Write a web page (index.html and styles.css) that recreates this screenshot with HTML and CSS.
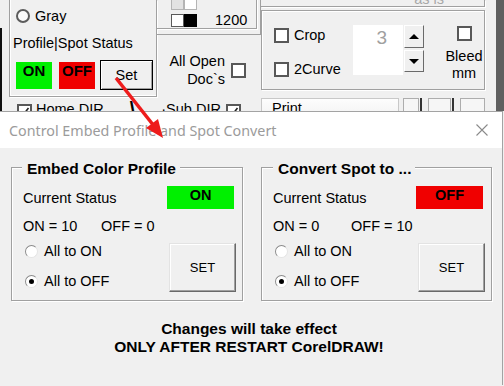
FILE: index.html
```html
<!DOCTYPE html>
<html lang="en">
  <head>
    <meta charset="UTF-8">
    <title>Control Embed Profile and Spot Convert</title>
    <link rel="stylesheet" href="styles.css">
  </head>
  <body>
    <!-- main macro window, mostly hidden behind the dialog -->
    <div class="app">
      <div class="edge"></div>
      <div class="app-left">
        <div class="app-top">
          <div class="box-status">
            <div class="opt"><span class="radio-big"></span>Gray</div>
            <div class="caption">Profile|Spot Status</div>
            <div class="flags">
              <span class="flag on">ON</span>
              <span class="flag off">OFF</span>
              <span class="btn-set">Set</span>
            </div>
          </div>
          <div class="app-mid">
            <div class="swatch-outer">
              <div class="swatch-inner">
                <div class="swatches">
                  <div class="sw-row"><span class="sw light"></span><span class="sw"></span></div>
                  <div class="sw-row"><span class="sw dark-edge"></span><span class="sw black"></span><span class="res">1200</span></div>
                </div>
              </div>
            </div>
            <div class="all-open">
              <span class="all-open-label">All Open<br>Doc`s</span>
              <span class="check"></span>
            </div>
          </div>
        </div>
        <div class="dir-row">
          <span class="check home-check">
            <svg width="11" height="11" viewBox="0 0 11 11"><path d="M1.5 5.5 L4.5 8.5 L9.5 2" fill="none" stroke="#222" stroke-width="1.6"/></svg>
          </span>
          <span class="home-dir">Home DIR</span>
          <span class="slash">\</span>
          <span class="sub-dir">&middot;Sub DIR</span>
          <span class="check sub-check">
            <svg width="11" height="11" viewBox="0 0 11 11"><path d="M1.5 5.5 L4.5 8.5 L9.5 2" fill="none" stroke="#222" stroke-width="1.6"/></svg>
          </span>
        </div>
      </div>
      <div class="app-right">
        <div class="asis"><span>as is</span></div>
        <div class="crop-box">
          <div class="chk-col">
            <div class="chk-row"><span class="check"></span>Crop</div>
            <div class="chk-row"><span class="check"></span>2Curve</div>
          </div>
          <div class="spin">
            <div class="spin-field">3</div>
            <div class="spin-btns">
              <span class="spin-btn up"><span class="tri-up"></span></span>
              <span class="spin-btn down"><span class="tri-down"></span></span>
            </div>
          </div>
          <div class="bleed">
            <span class="check"></span>
            <div class="bleed-label">Bleed<br>mm</div>
          </div>
        </div>
        <div class="print-row">
          <div class="print-field">Print</div>
          <span class="pbtn small"></span>
          <span class="pline"></span>
          <span class="pbtn mid"></span>
          <span class="pline"></span>
          <span class="pbtn wide"></span>
        </div>
      </div>
      <div class="app-bar"></div>
    </div>

    <!-- the dialog -->
    <div class="dialog">
      <div class="titlebar">
        <span>Control Embed Profile and Spot Convert</span>
        <svg class="close" width="12" height="12" viewBox="0 0 12 12">
          <path d="M0.5 0.5 L11.5 11.5 M11.5 0.5 L0.5 11.5" stroke="#8a8a8a" stroke-width="1.1"/>
        </svg>
      </div>
      <div class="dialog-body">
        <div class="groups">
          <div class="group">
            <div class="group-title first">Embed Color Profile</div>
            <div class="status-row">
              <span>Current Status</span>
              <span class="status on">ON</span>
            </div>
            <div class="counts"><span class="n">ON = 10</span><span>OFF = 0</span></div>
            <div class="choice-row">
              <div class="radios">
                <div class="ropt"><span class="rdot"></span>All to ON</div>
                <div class="ropt"><span class="rdot checked"></span>All to OFF</div>
              </div>
              <div class="btn">SET</div>
            </div>
          </div>
          <div class="group second">
            <div class="group-title">Convert Spot to ...</div>
            <div class="status-row">
              <span>Current Status</span>
              <span class="status off">OFF</span>
            </div>
            <div class="counts"><span class="n">ON = 0</span><span>OFF = 10</span></div>
            <div class="choice-row">
              <div class="radios">
                <div class="ropt"><span class="rdot"></span>All to ON</div>
                <div class="ropt"><span class="rdot checked"></span>All to OFF</div>
              </div>
              <div class="btn">SET</div>
            </div>
          </div>
        </div>
        <div class="note">Changes will take effect<br>ONLY AFTER RESTART CorelDRAW!</div>
      </div>
    </div>

    <!-- red pointer drawn over both windows -->
    <svg class="arrow" width="504" height="386" viewBox="0 0 504 386">
      <line x1="116" y1="78" x2="154" y2="126" stroke="#ee1c1c" stroke-width="3.5"/>
      <polygon points="163,138 146,128 158,119" fill="#ee1c1c"/>
    </svg>
  </body>
</html>
```

FILE: styles.css
```css
body {
    margin: 0;
    position: relative;
    background: #f0f0f0;
    font-family: "Liberation Sans", Arial, sans-serif;
    font-size: 14.5px;
    color: #000;
}

/* ---------- background window ---------- */
.app {
    display: flex;
    height: 111px;
    overflow: hidden;
    line-height: 18px;
}
.edge {
    width: 2px;
    margin-top: 28px;
    background: #101010;
}
.app-left {
    width: 259px;
    display: flex;
    flex-direction: column;
}
.app-top {
    display: flex;
    height: 97px;
    flex: none;
}
.box-status {
    margin-left: 7px;
    width: 148px;
    box-sizing: border-box;
    border: 1px solid #a0a0a0;
    border-top: none;
    box-shadow: inset 1px -1px 0 #fff, 1px 1px 0 #fff;
}
.opt {
    display: flex;
    align-items: center;
    gap: 5px;
    margin: 7px 0 0 6px;
}
.radio-big {
    width: 14px;
    height: 14px;
    box-sizing: border-box;
    border: 2px solid #5c5c5c;
    border-radius: 50%;
    background: #fbfbfb;
}
.caption {
    margin: 9px 0 0 3px;
}
.flags {
    display: flex;
    align-items: flex-start;
    margin: 8px 0 0 6px;
}
.flag {
    width: 36px;
    height: 27px;
    margin-top: 2px;
    text-align: center;
    font-weight: bold;
    font-size: 15px;
}
.flag.on {
    background: #00f000;
}
.flag.off {
    margin-left: 7px;
    background: #f00000;
}
.btn-set {
    margin-left: 5px;
    width: 53px;
    height: 30px;
    box-sizing: border-box;
    border: 1px solid #000;
    box-shadow: inset 1px 1px 0 #fff, inset -1px -1px 0 #a0a0a0;
    text-align: center;
    line-height: 28px;
}
.app-mid {
    width: 104px;
    display: flex;
    flex-direction: column;
}
.swatch-outer {
    height: 35px;
    flex: none;
    box-sizing: border-box;
    border-right: 1px solid #a0a0a0;
    border-bottom: 1px solid #a0a0a0;
    padding: 0 3px 2px 0;
}
.swatch-inner {
    height: 100%;
    box-sizing: border-box;
    border-right: 1px solid #a0a0a0;
    border-bottom: 1px solid #a0a0a0;
    box-shadow: 1px 1px 0 #fff;
    padding-left: 14px;
}
.swatches {
    margin-top: -3px;
}
.sw-row {
    display: flex;
    align-items: center;
    height: 13px;
}
.sw-row + .sw-row {
    margin-top: 4px;
}
.sw {
    width: 13px;
    height: 13px;
    box-sizing: border-box;
    border: 1px solid #b4b4b4;
    background: #fff;
}
.sw.light {
    background: #e2e2e2;
}
.sw.dark-edge {
    border-color: #5a5a5a;
}
.sw.black {
    background: #000;
    border-color: #000;
}
.res {
    margin-left: 18px;
    line-height: 13px;
}
.all-open {
    display: flex;
    align-items: center;
    justify-content: flex-end;
    padding: 17px 15px 0 0;
}
.all-open-label {
    text-align: right;
    margin-right: 6px;
}
.check {
    display: inline-flex;
    align-items: center;
    justify-content: center;
    width: 15px;
    height: 15px;
    box-sizing: border-box;
    border: 2px solid #585858;
    background: #fff;
    flex: none;
}
.dir-row {
    display: flex;
    align-items: flex-start;
    padding-top: 3px;
}
.home-check {
    margin: 4px 0 0 15px;
}
.home-dir {
    margin-left: 4px;
}
.slash {
    margin-left: 26px;
    font-weight: bold;
    font-size: 20px;
}
.sub-dir {
    margin-left: 26px;
}
.sub-check {
    margin: 4px 0 0 5px;
}
.app-right {
    width: 235px;
    display: flex;
    flex-direction: column;
}
.asis {
    height: 7px;
    width: 224px;
    flex: none;
    box-sizing: border-box;
    border-right: 1px solid #a0a0a0;
    border-bottom: 1px solid #a0a0a0;
    box-shadow: 1px 1px 0 #fff;
    overflow: hidden;
    text-align: right;
    padding-right: 40px;
    color: #a8a8a8;
}
.asis span {
    display: block;
    margin-top: -10px;
}
.crop-box {
    margin-top: 3px;
    width: 224px;
    height: 80px;
    flex: none;
    box-sizing: border-box;
    border: 1px solid #a0a0a0;
    box-shadow: inset 1px 1px 0 #fff, 1px 1px 0 #fff;
    display: flex;
    align-items: flex-start;
}
.chk-col {
    width: 79px;
    margin-left: 12px;
    padding-top: 15px;
    display: flex;
    flex-direction: column;
    gap: 16px;
}
.chk-row {
    display: flex;
    align-items: center;
    gap: 5px;
    height: 18px;
}
.spin {
    display: flex;
    gap: 1px;
    margin-top: 14px;
}
.spin-field {
    width: 50px;
    height: 50px;
    box-sizing: border-box;
    background: #fff;
    text-align: right;
    padding: 2px 16px 0 0;
    color: #a0a0a0;
    font-size: 19px;
    line-height: 22px;
}
.spin-btns {
    display: flex;
    flex-direction: column;
    gap: 2px;
}
.spin-btn {
    width: 20px;
    height: 23px;
    box-sizing: border-box;
    border: 1px solid;
    border-color: #fff #6a6a6a #6a6a6a #fff;
    display: flex;
    align-items: center;
    justify-content: center;
}
.spin-btn.down {
    height: 22px;
}
.tri-up {
    border-left: 5px solid transparent;
    border-right: 5px solid transparent;
    border-bottom: 5px solid #000;
}
.tri-down {
    border-left: 5px solid transparent;
    border-right: 5px solid transparent;
    border-top: 5px solid #000;
}
.bleed {
    margin: 15px 0 0 23px;
    width: 34px;
    display: flex;
    flex-direction: column;
    align-items: center;
}
.bleed-label {
    margin-top: 7px;
    text-align: center;
    line-height: 17px;
}
.print-row {
    display: flex;
    margin-top: 8px;
    height: 30px;
    flex: none;
}
.print-field {
    width: 138px;
    box-sizing: border-box;
    border: 1px solid #c8c8c8;
    background: linear-gradient(#fdfdfd, #ececec);
    padding: 0 0 0 10px;
}
.pbtn {
    box-sizing: border-box;
    border: 1px solid #adadad;
    background: #f6f6f6;
}
.pbtn.small {
    width: 16px;
    margin-left: 4px;
}
.pbtn.mid {
    width: 23px;
    margin-left: 6px;
}
.pbtn.wide {
    width: 25px;
    margin-left: 6px;
}
.pline {
    width: 2px;
    margin-left: 1px;
    background: #333;
}
.app-bar {
    flex: 1;
    background: #5f5f5f;
}

/* ---------- dialog ---------- */
.dialog {
    border-top: 1px solid #a3a3a3;
    border-right: 1px solid #a3a3a3;
    margin-right: 1px;
}
.titlebar {
    height: 36px;
    background: #fff;
    display: flex;
    align-items: center;
    justify-content: space-between;
    padding: 0 14px 0 9px;
    font-family: "Noto Sans", sans-serif;
    font-size: 14.3px;
    color: #9b9b9b;
}
.dialog-body {
    height: 237px;
    box-sizing: border-box;
    padding: 19px 0 0 11px;
}
.groups {
    display: flex;
    gap: 18px;
}
.group {
    width: 232px;
    height: 134px;
    box-sizing: border-box;
    border: 1px solid #a0a0a0;
    box-shadow: inset 1px 1px 0 #fff, 1px 1px 0 #fff;
    padding: 0 8px 0 11px;
    line-height: 18px;
}
.group.second {
    width: 231px;
}
.group-title {
    width: fit-content;
    margin-top: -8px;
    padding: 0 4px 0 5px;
    background: #f0f0f0;
    font-weight: bold;
    font-size: 15.5px;
}
.group-title.first {
    margin-left: -1px;
}
.status-row {
    display: flex;
    justify-content: space-between;
    align-items: center;
    margin-top: 8px;
    height: 23px;
}
.status {
    width: 67px;
    height: 23px;
    text-align: center;
    font-weight: bold;
    font-size: 14.5px;
}
.status.on {
    background: #00f000;
}
.status.off {
    background: #f00000;
}
.counts {
    display: flex;
    margin-top: 8px;
}
.counts .n {
    width: 78px;
}
.choice-row {
    display: flex;
    justify-content: space-between;
    margin: 8px -2px 0 0;
}
.radios {
    display: flex;
    flex-direction: column;
    gap: 12px;
    margin-top: -1px;
    padding-left: 2px;
}
.ropt {
    display: flex;
    align-items: center;
    gap: 6px;
}
.rdot {
    width: 13px;
    height: 13px;
    box-sizing: border-box;
    border: 1px solid;
    border-color: #8a8a8a #e4e4e4 #e4e4e4 #8a8a8a;
    border-radius: 50%;
    background: #fff;
    display: flex;
    align-items: center;
    justify-content: center;
}
.rdot.checked::after {
    content: "";
    width: 5px;
    height: 5px;
    border-radius: 50%;
    background: #000;
}
.btn {
    width: 67px;
    height: 49px;
    box-sizing: border-box;
    border: 1px solid;
    border-color: #e3e3e3 #696969 #696969 #e3e3e3;
    box-shadow: inset -1px -1px 0 #a0a0a0, inset 1px 1px 0 #fff;
    text-align: center;
    line-height: 47px;
    font-size: 13px;
}
.note {
    margin: 19px 4px 0 -11px;
    text-align: center;
    font-weight: bold;
    font-size: 15.5px;
    line-height: 18px;
}
.arrow {
    position: absolute;
    top: 0;
    left: 0;
    pointer-events: none;
}
```
